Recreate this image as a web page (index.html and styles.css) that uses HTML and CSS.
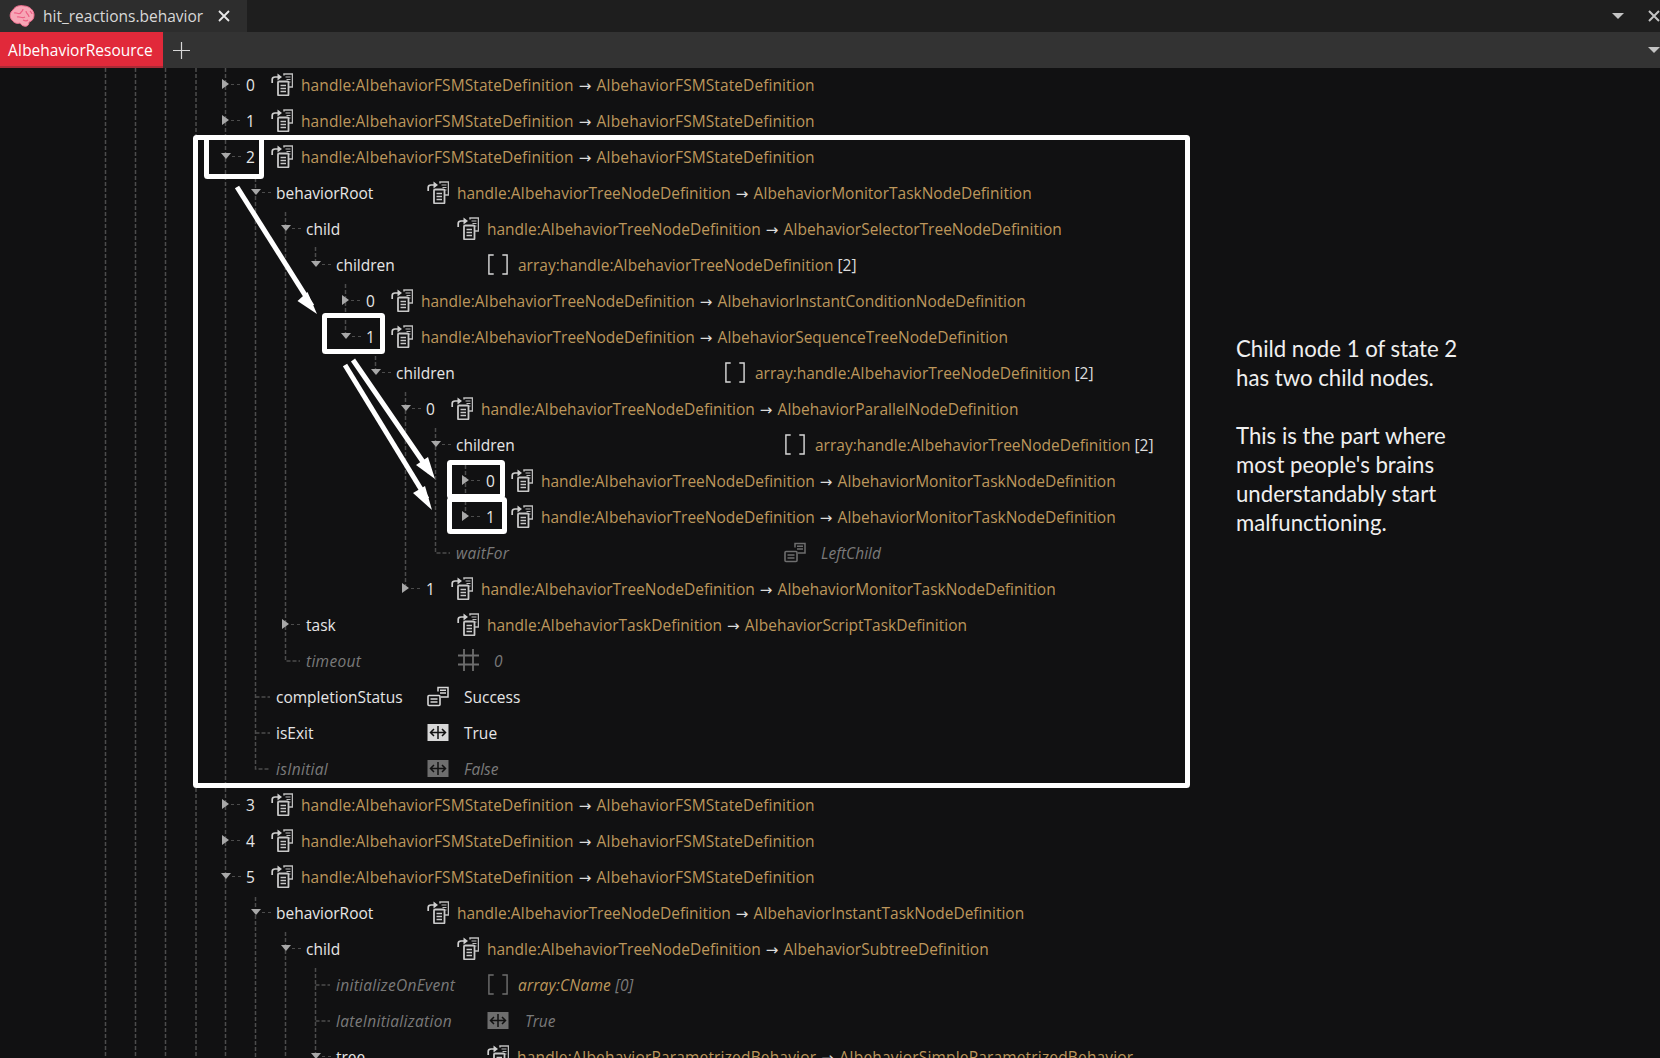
FILE: index.html
```html
<!DOCTYPE html>
<html lang="en">
<head>
<meta charset="utf-8">
<title>hit_reactions.behavior</title>
<link rel="stylesheet" href="styles.css">
</head>
<body>
<svg class="defs" width="0" height="0" aria-hidden="true">
  <symbol id="i-ptr" viewBox="0 0 22 23">
    <path d="M13 2.5V1h8.5v13H18" fill="none" stroke="#bdbdbd" stroke-width="1.5"/>
    <path d="M14.5 4h5M15.5 6.5h4M17 9h2.5" stroke="#bdbdbd" stroke-width="1.2"/>
    <rect x="7" y="8.5" width="10.5" height="14" rx="1" fill="none" stroke="#c8c8c8" stroke-width="1.8"/>
    <path d="M9.5 12.5h5.5M9.5 15.5h5.5M9.5 18.5h5.5" stroke="#c8c8c8" stroke-width="1.5"/>
    <path d="M1.2 10V6.5Q1.2 4 4 4H7" fill="none" stroke="#d0d0d0" stroke-width="1.7"/>
    <path d="M6.5 0.5L11 4L6.5 7.5z" fill="#d0d0d0"/>
  </symbol>
  <symbol id="i-enum" viewBox="0 0 22 20">
    <path d="M11 5V1h10v9.500h-7" fill="none" stroke="currentColor" stroke-width="1.500"/>
    <path d="M13 3.800h6M13 6.500h6" stroke="currentColor" stroke-width="1.400"/>
    <rect x="1" y="9" width="12" height="10" rx="1" fill="none" stroke="currentColor" stroke-width="1.600"/>
    <path d="M3.500 12.500h7M3.500 15.500h7" stroke="currentColor" stroke-width="1.400"/>
  </symbol>
  <symbol id="i-bool" viewBox="0 0 21 17">
    <rect width="21" height="17" fill="currentColor"/>
    <path d="M10.500 2v13M3 8.500h15M6.500 5L3 8.500L6.500 12M14.500 5L18 8.500L14.500 12" fill="none" stroke="#111" stroke-width="1.500"/>
  </symbol>
  <symbol id="i-arr" viewBox="0 0 23 22">
    <path d="M7 1H2V21H7M16 1H21V21H16" fill="none" stroke="currentColor" stroke-width="1.500"/>
  </symbol>
  <symbol id="i-num" viewBox="0 0 21 22">
    <path d="M6 0V22M15 0V22M0 6.500H21M0 15.500H21" stroke="currentColor" stroke-width="1.800"/>
  </symbol>
</svg>

<div class="tabs">
  <div class="tab">
    <svg class="brain" viewBox="0 0 26 24" aria-hidden="true">
      <path d="M3 16C0 13 1 8 4 6C6 2 11 1 15 2C20 2 25 6 25 11C25 15 23 17 20 18C20 21 18 23 15 22C13 22 12 20 11 19C8 20 5 19 3 16Z" fill="#f7a6b6" stroke="#f46f90" stroke-width="1"/>
      <path d="M5 9C8 8 9 11 12 9M14 5C14 8 11 8 11 10M17 7C17 10 20 10 20 13M8 13C11 12 13 15 16 13M21 7C22 8 23 9 23 10M14 16C16 17 18 17 19 16" fill="none" stroke="#ee5f85" stroke-width="1.200"/>
    </svg>
    <span class="tab-name">hit_reactions.behavior</span>
    <svg class="tab-x" viewBox="0 0 12 12" aria-hidden="true"><path d="M1 1L11 11M11 1L1 11" stroke="#e8e8e8" stroke-width="1.800"/></svg>
  </div>
  <div class="tabs-end">
    <span class="caret"></span>
    <svg class="win-x" viewBox="0 0 12 12" aria-hidden="true"><path d="M1 1L11 11M11 1L1 11" stroke="#c4c4c4" stroke-width="2"/></svg>
  </div>
</div>

<div class="chunks">
  <div class="chunk">AIbehaviorResource</div>
  <svg class="plus" viewBox="0 0 17 17" aria-hidden="true"><path d="M8.500 0V17M0 8.500H17" stroke="#d8d8d8" stroke-width="1.200"/></svg>
  <span class="caret chunks-caret"></span>
</div>

<svg class="guides" viewBox="0 0 1660 1058" aria-hidden="true">
  <path d="M105.500 68V1058M135.500 68V1058M165.500 68V1058M196 68V1058M225.500 68V1058"/>
  <path d="M255.500 178V769H270M285.500 212V661H300M315.500 247V265M345.500 284V337M375.500 356V373M405.500 392V589M435.500 428V553H450M465.500 465V517"/>
  <path d="M255.500 697H270M255.500 733H270"/>
  <path d="M255.500 897V1058M285.500 932V1058M315.500 968V1058M315.500 985H330M315.500 1021H330"/>
</svg>

<main class="main">
<div class="tree">
  <div class="row d0"><span class="tw right"></span><span class="name ns">0</span><span class="ic"><svg class="i22"><use href="#i-ptr"/></svg></span><span class="val fsm">handle:AIbehaviorFSMStateDefinition <span class="to">→</span> AIbehaviorFSMStateDefinition</span></div>
  <div class="row d0"><span class="tw right"></span><span class="name ns">1</span><span class="ic"><svg class="i22"><use href="#i-ptr"/></svg></span><span class="val fsm">handle:AIbehaviorFSMStateDefinition <span class="to">→</span> AIbehaviorFSMStateDefinition</span></div>
  <div class="row d0"><span class="tw down"></span><span class="name ns">2</span><span class="ic"><svg class="i22"><use href="#i-ptr"/></svg></span><span class="val fsm">handle:AIbehaviorFSMStateDefinition <span class="to">→</span> AIbehaviorFSMStateDefinition</span></div>
  <div class="row d1"><span class="tw down"></span><span class="name nm">behaviorRoot</span><span class="ic"><svg class="i22"><use href="#i-ptr"/></svg></span><span class="val">handle:AIbehaviorTreeNodeDefinition <span class="to">→</span> AIbehaviorMonitorTaskNodeDefinition</span></div>
  <div class="row d2"><span class="tw down"></span><span class="name nm">child</span><span class="ic"><svg class="i22"><use href="#i-ptr"/></svg></span><span class="val">handle:AIbehaviorTreeNodeDefinition <span class="to">→</span> AIbehaviorSelectorTreeNodeDefinition</span></div>
  <div class="row d3"><span class="tw down"></span><span class="name nm">children</span><span class="ic ic-arr"><svg class="i22 light"><use href="#i-arr"/></svg></span><span class="val">array:handle:AIbehaviorTreeNodeDefinition <span class="ct">[2]</span></span></div>
  <div class="row d4"><span class="tw right"></span><span class="name ns">0</span><span class="ic"><svg class="i22"><use href="#i-ptr"/></svg></span><span class="val">handle:AIbehaviorTreeNodeDefinition <span class="to">→</span> AIbehaviorInstantConditionNodeDefinition</span></div>
  <div class="row d4"><span class="tw down"></span><span class="name ns">1</span><span class="ic"><svg class="i22"><use href="#i-ptr"/></svg></span><span class="val">handle:AIbehaviorTreeNodeDefinition <span class="to">→</span> AIbehaviorSequenceTreeNodeDefinition</span></div>
  <div class="row d5"><span class="tw down"></span><span class="name nl">children</span><span class="ic ic-arr"><svg class="i22 light"><use href="#i-arr"/></svg></span><span class="val">array:handle:AIbehaviorTreeNodeDefinition <span class="ct">[2]</span></span></div>
  <div class="row d6"><span class="tw down"></span><span class="name ns">0</span><span class="ic"><svg class="i22"><use href="#i-ptr"/></svg></span><span class="val">handle:AIbehaviorTreeNodeDefinition <span class="to">→</span> AIbehaviorParallelNodeDefinition</span></div>
  <div class="row d7"><span class="tw down"></span><span class="name nl">children</span><span class="ic ic-arr"><svg class="i22 light"><use href="#i-arr"/></svg></span><span class="val">array:handle:AIbehaviorTreeNodeDefinition <span class="ct">[2]</span></span></div>
  <div class="row d8"><span class="tw right"></span><span class="name ns">0</span><span class="ic"><svg class="i22"><use href="#i-ptr"/></svg></span><span class="val">handle:AIbehaviorTreeNodeDefinition <span class="to">→</span> AIbehaviorMonitorTaskNodeDefinition</span></div>
  <div class="row d8"><span class="tw right"></span><span class="name ns">1</span><span class="ic"><svg class="i22"><use href="#i-ptr"/></svg></span><span class="val">handle:AIbehaviorTreeNodeDefinition <span class="to">→</span> AIbehaviorMonitorTaskNodeDefinition</span></div>
  <div class="row d7 off"><span class="tw"></span><span class="name nl">waitFor</span><span class="ic ic-w"><svg class="i22"><use href="#i-enum"/></svg></span><span class="plain">LeftChild</span></div>
  <div class="row d6"><span class="tw right"></span><span class="name ns">1</span><span class="ic"><svg class="i22"><use href="#i-ptr"/></svg></span><span class="val">handle:AIbehaviorTreeNodeDefinition <span class="to">→</span> AIbehaviorMonitorTaskNodeDefinition</span></div>
  <div class="row d2"><span class="tw right"></span><span class="name nm">task</span><span class="ic"><svg class="i22"><use href="#i-ptr"/></svg></span><span class="val">handle:AIbehaviorTaskDefinition <span class="to">→</span> AIbehaviorScriptTaskDefinition</span></div>
  <div class="row d2 off"><span class="tw"></span><span class="name nm">timeout</span><span class="ic ic-w ic-num"><svg class="i21"><use href="#i-num"/></svg></span><span class="plain">0</span></div>
  <div class="row d1"><span class="tw"></span><span class="name nm">completionStatus</span><span class="ic ic-w light"><svg class="i22"><use href="#i-enum"/></svg></span><span class="plain">Success</span></div>
  <div class="row d1"><span class="tw"></span><span class="name nm">isExit</span><span class="ic ic-w light"><svg class="i22 i-b"><use href="#i-bool"/></svg></span><span class="plain">True</span></div>
  <div class="row d1 off"><span class="tw"></span><span class="name nm">isInitial</span><span class="ic ic-w"><svg class="i22 i-b"><use href="#i-bool"/></svg></span><span class="plain">False</span></div>
  <div class="row d0"><span class="tw right"></span><span class="name ns">3</span><span class="ic"><svg class="i22"><use href="#i-ptr"/></svg></span><span class="val fsm">handle:AIbehaviorFSMStateDefinition <span class="to">→</span> AIbehaviorFSMStateDefinition</span></div>
  <div class="row d0"><span class="tw right"></span><span class="name ns">4</span><span class="ic"><svg class="i22"><use href="#i-ptr"/></svg></span><span class="val fsm">handle:AIbehaviorFSMStateDefinition <span class="to">→</span> AIbehaviorFSMStateDefinition</span></div>
  <div class="row d0"><span class="tw down"></span><span class="name ns">5</span><span class="ic"><svg class="i22"><use href="#i-ptr"/></svg></span><span class="val fsm">handle:AIbehaviorFSMStateDefinition <span class="to">→</span> AIbehaviorFSMStateDefinition</span></div>
  <div class="row d1"><span class="tw down"></span><span class="name nm">behaviorRoot</span><span class="ic"><svg class="i22"><use href="#i-ptr"/></svg></span><span class="val">handle:AIbehaviorTreeNodeDefinition <span class="to">→</span> AIbehaviorInstantTaskNodeDefinition</span></div>
  <div class="row d2"><span class="tw down"></span><span class="name nm">child</span><span class="ic"><svg class="i22"><use href="#i-ptr"/></svg></span><span class="val">handle:AIbehaviorTreeNodeDefinition <span class="to">→</span> AIbehaviorSubtreeDefinition</span></div>
  <div class="row d3 off"><span class="tw"></span><span class="name nm">initializeOnEvent</span><span class="ic ic-arr"><svg class="i22"><use href="#i-arr"/></svg></span><span class="val">array:CName <span class="ct">[0]</span></span></div>
  <div class="row d3 off"><span class="tw"></span><span class="name nm">lateInitialization</span><span class="ic ic-w2"><svg class="i22 i-b"><use href="#i-bool"/></svg></span><span class="plain">True</span></div>
  <div class="row d3"><span class="tw down"></span><span class="name nm">tree</span><span class="ic"><svg class="i22"><use href="#i-ptr"/></svg></span><span class="val wide">handle:AIbehaviorParametrizedBehavior <span class="to">→</span> AIbehaviorSimpleParametrizedBehavior</span></div>
</div>
<aside class="note">
  <p>Child node 1 of state 2<br>has two child nodes.</p>
  <p>This is the part where<br>most people's brains<br>understandably start<br>malfunctioning.</p>
</aside>
</main>

<svg class="marks" viewBox="0 0 1660 1058" aria-hidden="true">
  <rect x="195.500" y="137.500" width="992" height="648" rx="1"/>
  <rect x="206.500" y="137.500" width="55" height="39" rx="1"/>
  <rect x="324.500" y="315.500" width="58" height="36" rx="1"/>
  <rect x="449.500" y="462.500" width="53" height="34" rx="1"/>
  <rect x="449.500" y="499.500" width="55" height="32" rx="1"/>
  <path class="shaft" d="M237 187L312 306"/>
  <path class="head" d="M317 314L297.500 301L307.500 292Z"/>
  <path class="shaft" d="M353 360L430 472"/>
  <path class="head" d="M435 479L416 465L428 457Z"/>
  <path class="shaft" d="M345 365L427 499"/>
  <path class="head" d="M432 510L413 493L425 486Z"/>
</svg>
</body>
</html>
```

FILE: styles.css
```css
* { box-sizing: border-box; }
html, body { margin: 0; height: 100%; }
body {
  width: 1660px;
  height: 1058px;
  position: relative;
  overflow: hidden;
  background: #111112;
  color: #e6e6e6;
  font-family: "Open Sans", "Liberation Sans", sans-serif;
  font-size: 15.5px;
  display: flex;
  flex-direction: column;
}
.defs { position: absolute; }

.tabs { flex: none; height: 32px; background: #1e1e1e; display: flex; align-items: stretch; justify-content: space-between; }
.tab { width: 247px; background: #2d2d2d; display: flex; align-items: center; padding-left: 9px; }
.brain { width: 26px; height: 24px; flex: none; }
.tab-name { margin-left: 8px; color: #d8d8d8; font-size: 15.5px; width: 168px; white-space: nowrap; }
.tab-x { width: 12px; height: 12px; margin-left: 7px; }
.tabs-end { display: flex; align-items: center; }
.caret { width: 0; height: 0; border: 6px solid transparent; border-top-color: #c4c4c4; border-bottom: 0; display: block; }
.win-x { width: 12px; height: 12px; margin-left: 24px; }

.chunks { flex: none; height: 36px; background: #333; display: flex; align-items: center; }
.chunk { width: 163px; height: 36px; background: #e1293a; border-bottom: 2px solid #a92a36; color: #fff; padding-left: 8px; line-height: 36px; font-size: 15.5px; white-space: nowrap; }
.plus { width: 17px; height: 17px; margin-left: 10px; }
.chunks-caret { margin-left: auto; }

.guides { position: absolute; left: 0; top: 0; width: 1660px; height: 1058px; fill: none; stroke: #4c4c4c; stroke-width: 1.5; stroke-dasharray: 4 2; }
.marks { position: absolute; left: 0; top: 0; width: 1660px; height: 1058px; }
.marks rect { fill: none; stroke: #fff; stroke-width: 5; }
.marks .shaft { fill: none; stroke: #fff; stroke-width: 5; }
.marks .head { fill: #fff; }

.main { flex: 1; min-height: 0; display: flex; position: relative; }
.tree { width: 1236px; flex: none; }
.row { height: 36px; display: flex; align-items: center; white-space: nowrap; }
.row:first-child { margin-top: -2px; }
.d0 { padding-left: 217px; }
.d1 { padding-left: 247px; }
.d2 { padding-left: 277px; }
.d3 { padding-left: 307px; }
.d4 { padding-left: 337px; }
.d5 { padding-left: 367px; }
.d6 { padding-left: 397px; }
.d7 { padding-left: 427px; }
.d8 { padding-left: 457px; }

.tw { width: 29px; flex: none; display: flex; align-items: center; }
.tw.right::before { content: ""; width: 0; height: 0; margin-left: 5px; border-left: 7px solid #a8a8a8; border-top: 5px solid transparent; border-bottom: 5px solid transparent; }
.tw.down::before { content: ""; width: 0; height: 0; margin-left: 4px; border-top: 6px solid #a8a8a8; border-left: 5px solid transparent; border-right: 5px solid transparent; }
.tw.right::after, .tw.down::after { content: ""; width: 9px; margin-left: 2px; border-top: 1.5px dashed #4c4c4c; }
.tw.down::after { margin-left: 1px; }

.name { flex: none; color: #e6e6e6; padding-top: 1px; }
.ns { width: 25px; }
.nm { width: 151px; }
.nl { width: 328px; }
.ic { width: 30px; flex: none; display: flex; align-items: center; color: #a8a8a8; }
.ic-arr { width: 31px; }
.ic-w { width: 37px; }
.ic-w2 { width: 38px; }
.ic-num { padding-left: 1px; }
.light { color: #d8d8d8; }
.i22 { width: 22px; height: 23px; display: block; }
.i-b { height: 17px; }
.i21 { width: 21px; height: 22px; display: block; }
.val { color: #bd975c; padding-top: 1px; }
.fsm { letter-spacing: 0.085px; }
.wide { letter-spacing: 0.17px; }
.to { color: #dcdcdc; font-family: "DejaVu Sans", sans-serif; font-size: 15px; margin: 0 1px; }
.ct { color: #dcdcdc; }
.plain { color: #e6e6e6; padding-top: 1px; }

.off .name, .off .plain, .off .ct { font-style: italic; color: #7a7a7a; }
.off .name { letter-spacing: 0.3px; }
.off .val { font-style: italic; letter-spacing: 0.2px; }
.off .ic { color: #6e6e6e; }

.note { padding-top: 266px; font-family: Lato, "Open Sans", sans-serif; font-size: 22.2px; line-height: 29px; color: #efefef; }
.note p { margin: 0 0 29px; }
```
